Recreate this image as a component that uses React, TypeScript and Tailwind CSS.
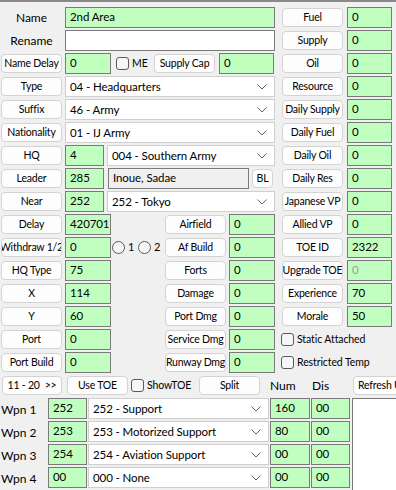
import React from 'react';

/**
 * Unit editor form
 *
 * Dense WinForms-style grid of buttons, green value boxes and combo boxes
 */

const FONT = "font-['Lato','Segoe_UI',sans-serif]";

function Btn({ label, className = 'w-[61px]' }: { label: string; className?: string }) {
  return (
    <div
      className={`flex h-[19px] shrink-0 items-center justify-center overflow-hidden whitespace-nowrap rounded-[4px] border border-[#d3d3d3] bg-[#fdfdfd] text-[10.5px] tracking-[-0.2px] text-black ${className}`}
    >
      {label}
    </div>
  );
}

function Box({
  value,
  className = 'w-[46px]',
  tone = 'green',
  dim = false,
}: {
  value: string;
  className?: string;
  tone?: 'green' | 'white' | 'gray';
  dim?: boolean;
}) {
  const bg = tone === 'green' ? 'bg-[#c0ffc0]' : tone === 'white' ? 'bg-white' : 'bg-[#f0f0f0]';
  return (
    <div
      className={`h-[21px] shrink-0 overflow-hidden whitespace-nowrap border border-[#7a7a7a] px-[4px] text-[11.5px] leading-[18px] tracking-[-0.1px] ${bg} ${
        dim ? 'text-[#9a9a9a]' : 'text-black'
      } ${className}`}
    >
      {value}
    </div>
  );
}

function Combo({ value, className = 'w-[210px]' }: { value: string; className?: string }) {
  return (
    <div
      className={`flex h-[21px] shrink-0 items-center justify-between overflow-hidden whitespace-nowrap border border-[#cfcfcf] bg-white pl-[4px] pr-[7px] text-[11.5px] tracking-[-0.1px] text-black ${className}`}
    >
      <span>{value}</span>
      <svg width="10" height="6" viewBox="0 0 10 6" className="shrink-0">
        <path d="M0.5 0.5 L5 5 L9.5 0.5" fill="none" stroke="#606060" strokeWidth="1" />
      </svg>
    </div>
  );
}

function Check({ label, className = '' }: { label: string; className?: string }) {
  return (
    <div className={`flex shrink-0 items-center gap-[3px] text-[10.5px] tracking-[-0.1px] text-black ${className}`}>
      <div className="h-[13px] w-[13px] shrink-0 rounded-[3px] border border-[#5a5a5a] bg-[#f6f6f6]" />
      <span className="whitespace-nowrap">{label}</span>
    </div>
  );
}

function Radio({ label }: { label: string }) {
  return (
    <div className="flex items-center gap-[3px] text-[11px] text-black">
      <div className="h-[13px] w-[13px] shrink-0 rounded-full border border-[#5a5a5a] bg-[#f6f6f6]" />
      <span className="w-[6px]">{label}</span>
    </div>
  );
}

const rightRows: [string, string, boolean?][] = [
  ['Fuel', '0'],
  ['Supply', '0'],
  ['Oil', '0'],
  ['Resource', '0'],
  ['Daily Supply', '0'],
  ['Daily Fuel', '0'],
  ['Daily Oil', '0'],
  ['Daily Res', '0'],
  ['Japanese VP', '0'],
  ['Allied VP', '0'],
  ['TOE ID', '2322'],
  ['Upgrade TOE', '0', true],
  ['Experience', '70'],
  ['Morale', '50'],
];

const midRows = [
  ['Delay', '420701', 'Airfield', '0'],
  ['Withdraw 1/2', '0', 'Af Build', '0'],
  ['HQ Type', '75', 'Forts', '0'],
  ['X', '114', 'Damage', '0'],
  ['Y', '60', 'Port Dmg', '0'],
  ['Port', '0', 'Service Dmg', '0'],
  ['Port Build', '0', 'Runway Dmg', '0'],
];

const weapons = [
  ['Wpn 1', '252', '252 - Support', '160', '00'],
  ['Wpn 2', '253', '253 - Motorized Support', '80', '00'],
  ['Wpn 3', '254', '254 - Aviation Support', '00', '00'],
  ['Wpn 4', '00', '000 - None', '00', '00'],
];

export default function App() {
  return (
    <div className={`h-[490px] w-[396px] overflow-hidden border-t-2 border-[#8a8a8a] bg-[#f0f0f0] pt-[5px] ${FONT}`}>
      {/* Upper block: left form and right resources column */}
      <div className="flex">
        <div className="flex w-[275px] shrink-0 flex-col gap-[2px] pl-[1px]">
          <div className="flex h-[21px] items-center gap-[3px]">
            <div className="w-[61px] text-center text-[12px]">Name</div>
            <Box value="2nd Area" className="w-[210px]" />
          </div>
          <div className="flex h-[21px] items-center gap-[3px]">
            <div className="w-[61px] text-center text-[12px]">Rename</div>
            <Box value="" tone="white" className="w-[210px]" />
          </div>
          <div className="flex h-[21px] items-center">
            <Btn label="Name Delay" />
            <Box value="0" className="ml-[3px] w-[46px]" />
            <Check label="ME" className="ml-[5px] w-[35px]" />
            <Btn label="Supply Cap" className="ml-[3px] w-[61px]" />
            <Box value="0" className="ml-[4px] w-[55px]" />
          </div>
          {[
            ['Type', '04 - Headquarters'],
            ['Suffix', '46 - Army'],
            ['Nationality', '01 - IJ Army'],
          ].map(([b, v]) => (
            <div key={b} className="flex h-[21px] items-center gap-[3px]">
              <Btn label={b} />
              <Combo value={v} />
            </div>
          ))}
          <div className="flex h-[21px] items-center gap-[3px]">
            <Btn label="HQ" />
            <Box value="4" className="w-[39px]" />
            <Combo value="004 - Southern Army" className="w-[168px]" />
          </div>
          <div className="flex h-[21px] items-center gap-[3px]">
            <Btn label="Leader" />
            <Box value="285" className="w-[39px]" />
            <Box value="Inoue, Sadae" tone="gray" className="ml-[1px] w-[141px]" />
            <Btn label="BL" className="h-[18px] w-[21px]" />
          </div>
          <div className="flex h-[21px] items-center gap-[3px]">
            <Btn label="Near" />
            <Box value="252" className="w-[39px]" />
            <Combo value="252 - Tokyo" className="w-[168px]" />
          </div>
          {midRows.map(([b, v, b2, v2], i) => (
            <div key={b} className="flex h-[21px] items-center gap-[3px]">
              <Btn label={b} />
              <Box value={v} />
              {i === 1 ? (
                <div className="-ml-[2px] mr-[2px] flex w-[48px] shrink-0 items-center gap-[4px]">
                  <Radio label="1" />
                  <Radio label="2" />
                </div>
              ) : (
                <div className="w-[48px] shrink-0" />
              )}
              <Btn label={b2} />
              <Box value={v2} />
            </div>
          ))}
        </div>

        <div className="ml-[6px] flex flex-col gap-[2px]">
          {rightRows.map(([b, v, dim]) => (
            <div key={b} className="flex h-[21px] items-center gap-[4px]">
              <Btn label={b} className="ml-[1px] w-[61px]" />
              <Box value={v} dim={dim} className="w-[45px]" />
            </div>
          ))}
          <div className="flex h-[21px] items-center">
            <Check label="Static Attached" />
          </div>
          <div className="flex h-[21px] items-center">
            <Check label="Restricted Temp" />
          </div>
        </div>
      </div>

      {/* Toolbar row */}
      <div className="mt-[2px] flex h-[21px] items-center">
        <Btn label="11 - 20  >>" className="ml-[2px] w-[60px] whitespace-pre" />
        <Btn label="Use TOE" className="ml-[5px] w-[61px]" />
        <Check label="ShowTOE" className="ml-[3px] w-[65px]" />
        <Btn label="Split" className="ml-[3px] w-[61px]" />
        <span className="ml-[10px] w-[42px] shrink-0 text-[12px]">Num</span>
        <span className="w-[41px] shrink-0 text-[12px]">Dis</span>
        <Btn label="Refresh U" className="w-[60px] justify-start rounded-r-none pl-[4px]" />
      </div>

      {/* Weapons */}
      <div className="mt-[2px] flex">
        <div className="flex shrink-0 flex-col gap-[2px]">
          {weapons.map(([l, id, name, num, dis]) => (
            <div key={l} className="flex h-[21px] items-center">
              <span className="w-[48px] shrink-0 pl-[1px] pt-[3px] text-[12px]">{l}</span>
              <Box value={id} className="w-[39px]" />
              <Combo value={name} className="ml-[1px] w-[181px]" />
              <Box value={num} className="ml-[1px] w-[40px]" />
              <Box value={dis} className="ml-[1px] w-[39px]" />
            </div>
          ))}
        </div>
        <div className="ml-[2px] h-[100px] flex-1 border border-r-0 border-[#7a7a7a] bg-white" />
      </div>
    </div>
  );
}
